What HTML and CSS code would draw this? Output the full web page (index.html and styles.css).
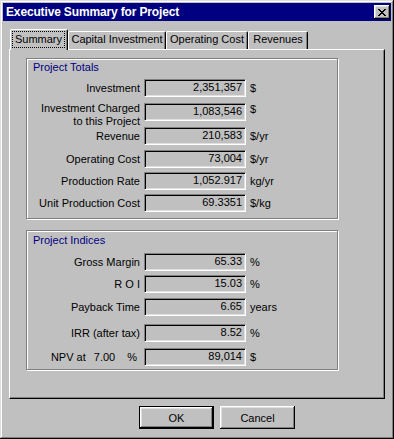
FILE: index.html
```html
<!DOCTYPE html>
<html lang="en">
<head>
    <meta charset="UTF-8">
    <title>Executive Summary for Project</title>
    <link rel="stylesheet" href="styles.css">
</head>
<body>
    <div class="window">
        <div class="titlebar">
            <span class="title">Executive Summary for Project</span>
            <div class="close-btn">
                <svg width="8" height="7" viewBox="0 0 8 7"><path fill="#000" d="M0 0h2v1H0zM6 0h2v1H6zM1 1h2v1H1zM5 1h2v1H5zM2 2h4v1H2zM3 3h2v1H3zM2 4h4v1H2zM1 5h2v1H1zM5 5h2v1H5zM0 6h2v1H0zM6 6h2v1H6z"/></svg>
            </div>
        </div>

        <div class="dialog-body">
            <div class="tabs">
                <div class="tab active"><span class="focus">Summary</span></div>
                <div class="tab tab-capital">Capital Investment</div>
                <div class="tab tab-operating">Operating Cost</div>
                <div class="tab tab-revenues">Revenues</div>
            </div>

            <div class="tab-panel">
                <div class="group group-totals">
                    <div class="group-title">Project Totals</div>
                    <div class="row sp5">
                        <span class="label">Investment</span>
                        <span class="field">2,351,357</span>
                        <span class="unit">$</span>
                    </div>
                    <div class="row sp6 row-tall">
                        <span class="label two-line">Investment Charged<br>to this Project</span>
                        <span class="field">1,083,546</span>
                        <span class="unit">$</span>
                    </div>
                    <div class="row sp6">
                        <span class="label">Revenue</span>
                        <span class="field">210,583</span>
                        <span class="unit">$/yr</span>
                    </div>
                    <div class="row sp5">
                        <span class="label">Operating Cost</span>
                        <span class="field">73,004</span>
                        <span class="unit">$/yr</span>
                    </div>
                    <div class="row sp4">
                        <span class="label">Production Rate</span>
                        <span class="field">1,052.917</span>
                        <span class="unit">kg/yr</span>
                    </div>
                    <div class="row sp4">
                        <span class="label">Unit Production Cost</span>
                        <span class="field">69.3351</span>
                        <span class="unit">$/kg</span>
                    </div>
                </div>

                <div class="group group-indices">
                    <div class="group-title">Project Indices</div>
                    <div class="row sp6">
                        <span class="label">Gross Margin</span>
                        <span class="field">65.33</span>
                        <span class="unit">%</span>
                    </div>
                    <div class="row sp4">
                        <span class="label">R O I</span>
                        <span class="field">15.03</span>
                        <span class="unit">%</span>
                    </div>
                    <div class="row sp5">
                        <span class="label">Payback Time</span>
                        <span class="field">6.65</span>
                        <span class="unit">years</span>
                    </div>
                    <div class="row sp8">
                        <span class="label">IRR (after tax)</span>
                        <span class="field">8.52</span>
                        <span class="unit">%</span>
                    </div>
                    <div class="row sp6">
                        <span class="label npv">NPV at <span class="rate">7.00</span><span class="pct">%</span></span>
                        <span class="field">89,014</span>
                        <span class="unit">$</span>
                    </div>
                </div>
            </div>

            <div class="button-row">
                <div class="btn btn-default">OK</div>
                <div class="btn">Cancel</div>
            </div>
        </div>
    </div>
</body>
</html>
```

FILE: styles.css
```css
body { margin: 0; font-family: "Liberation Sans", Arial, sans-serif; font-size: 11px; color: #000; background: #c0c0c0; }
.window { width: 394px; height: 439px; box-sizing: border-box; padding: 3px; background: #c0c0c0; box-shadow: inset -1px -1px #000, inset 1px 1px #dfdfdf, inset -2px -2px #808080, inset 2px 2px #fff; }

.titlebar { height: 18px; background: #000080; display: flex; align-items: center; justify-content: space-between; padding: 0 1px 0 3px; }
.title { color: #fff; font-weight: bold; font-size: 12px; letter-spacing: -0.15px; }
.close-btn { width: 16px; height: 14px; box-sizing: border-box; background: #c0c0c0; display: flex; align-items: center; justify-content: center; box-shadow: inset -1px -1px #000, inset 1px 1px #fff, inset -2px -2px #808080, inset 2px 2px #dfdfdf; }
.close-btn svg { display: block; margin-left: -1px; }

.dialog-body { padding: 8px 6px 0 6px; }

.tabs { display: flex; align-items: flex-end; height: 20px; padding-left: 1px; }
.tab { height: 18px; box-sizing: border-box; border: 1px solid; border-color: #fff #000 transparent #fff; border-bottom: none; border-radius: 2px 2px 0 0; box-shadow: inset -1px 0 #808080; text-align: center; line-height: 14px; white-space: nowrap; background: #c0c0c0; }
.tab.active { width: 58px; height: 21px; margin-bottom: -1px; position: relative; z-index: 1; padding: 1px 2px 0 1px; }
.tab-capital { width: 98px; }
.tab-operating { width: 82px; }
.tab-revenues { width: 60px; }
.focus { display: block; height: 17px; box-sizing: border-box; border: 1px dotted #000; line-height: 15px; }

.tab-panel { height: 350px; box-sizing: border-box; border: 1px solid; border-color: #fff #000 #000 #fff; box-shadow: inset -1px -1px #808080; padding: 8px 0 0 16px; }

.group { width: 312px; box-sizing: border-box; border: 1px solid #808080; box-shadow: inset 1px 1px #fff, 1px 1px #fff; }
.group-totals { height: 161px; padding-top: 2px; }
.group-indices { height: 140px; margin-top: 11px; padding-top: 3px; }
.group-title { color: #000080; padding-left: 6px; line-height: 13px; }

.row { display: flex; align-items: center; height: 18px; }
.row-tall { align-items: flex-start; }
.sp4 { margin-top: 4px; }
.sp5 { margin-top: 5px; }
.sp6 { margin-top: 6px; }
.sp8 { margin-top: 8px; }

.label { width: 113px; text-align: right; white-space: nowrap; line-height: 13px; }
.two-line { margin-top: -1px; }
.npv .rate { margin-left: 5px; }
.npv .pct { margin-left: 12px; margin-right: 3px; }

.field { width: 102px; height: 18px; box-sizing: border-box; margin-left: 4px; border: 1px solid; border-color: #808080 #fff #fff #808080; box-shadow: inset 1px 1px #000, inset -1px -1px #dfdfdf; text-align: right; padding-right: 3px; line-height: 15px; }
.unit { margin-left: 4px; }

.button-row { display: flex; gap: 6px; padding: 7px 0 0 130px; }
.btn { width: 75px; height: 23px; box-sizing: border-box; background: #c0c0c0; display: flex; align-items: center; justify-content: center; box-shadow: inset -1px -1px #000, inset 1px 1px #fff, inset -2px -2px #808080, inset 2px 2px #dfdfdf; }
.btn-default { border: 1px solid #000; }
```
